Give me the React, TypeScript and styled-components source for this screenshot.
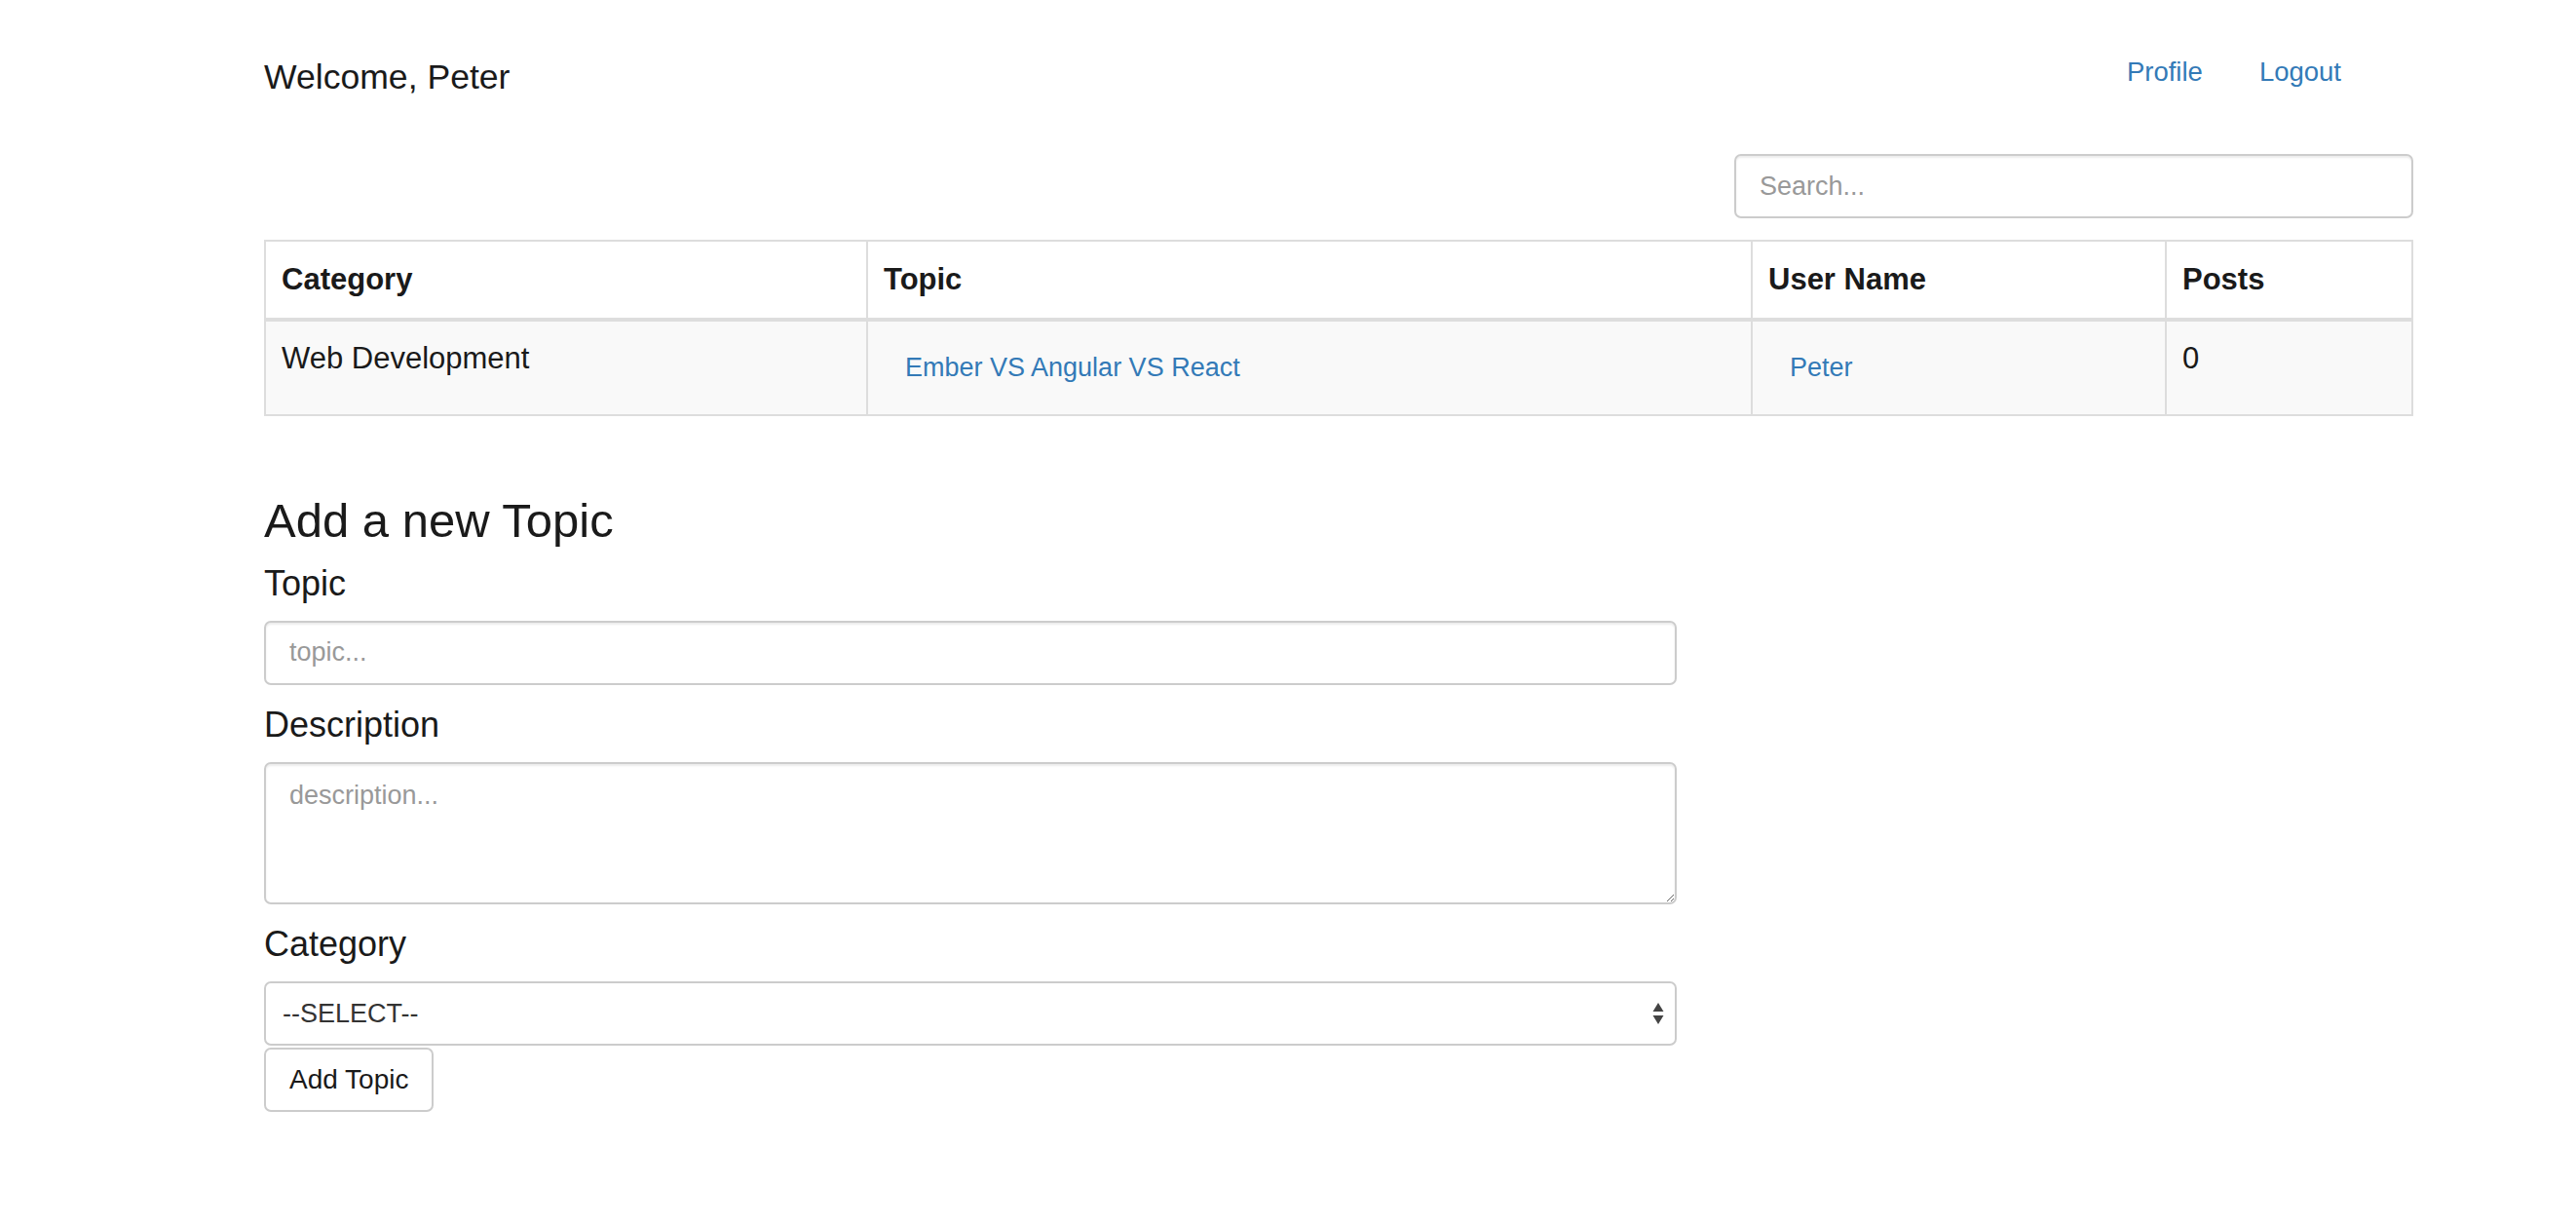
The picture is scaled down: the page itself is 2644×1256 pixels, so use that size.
import React from 'react';
import styled, { createGlobalStyle } from 'styled-components';

const GlobalStyle = createGlobalStyle`
  html, body {
    margin: 0;
    padding: 0;
    background: #fff;
  }
  body {
    font-family: "Liberation Sans", Arial, Helvetica, sans-serif;
    color: #333;
  }
  * {
    box-sizing: border-box;
  }
`;

const Page = styled.div`
  width: 2206px;
  margin-left: 271px;
  padding-bottom: 80px;
`;

const Header = styled.header`
  display: flex;
  align-items: center;
  justify-content: space-between;
  margin-top: 56px;
  height: 48px;
`;

const Welcome = styled.div`
  font-size: 35.6px;
  line-height: 1.1;
  color: #1a1a1a;
`;

const Nav = styled.nav`
  display: flex;
  align-items: center;
  gap: 58px;
  margin-bottom: 12px;
  padding-right: 74px;
`;

const NavLink = styled.a`
  font-size: 27.5px;
  color: #337ab7;
  text-decoration: none;
  cursor: pointer;
`;

const SearchRow = styled.div`
  display: flex;
  justify-content: flex-end;
  margin-top: 54px;
`;

const SmallInput = styled.input<{ $width?: number }>`
  display: block;
  width: ${(p) => (p.$width ? `${p.$width}px` : '100%')};
  height: 66px;
  padding: 0 24px;
  font-family: inherit;
  font-size: 27px;
  color: #555;
  background: #fff;
  border: 2px solid #ccc;
  border-radius: 7px;
  box-shadow: inset 0 2px 2px rgba(0, 0, 0, 0.075);
  outline: none;

  &::placeholder {
    color: #999;
  }
`;

const Table = styled.table`
  width: 100%;
  margin-top: 22px;
  border-collapse: collapse;
  table-layout: fixed;
  font-size: 31px;
  line-height: 1.42857;
`;

const HeadCell = styled.th`
  text-align: left;
  font-weight: 700;
  color: #1a1a1a;
  padding: 17px 16px;
  border: 2px solid #ddd;
  border-bottom-width: 4px;
`;

const Row = styled.tr`
  background: #f9f9f9;
`;

const Cell = styled.td`
  vertical-align: top;
  padding: 16px;
  border: 2px solid #ddd;
  color: #1a1a1a;
`;

const LinkButton = styled.a`
  display: inline-block;
  padding: 11px 22px;
  font-size: 27px;
  line-height: 1.5;
  color: #337ab7;
  text-decoration: none;
  cursor: pointer;
`;

const Form = styled.form`
  display: flex;
  flex-direction: column;
  width: 1450px;
  margin-top: 80px;
`;

const Title = styled.h3`
  margin: 0 0 17px;
  font-size: 49px;
  line-height: 54px;
  font-weight: 400;
  color: #1a1a1a;
`;

const Label = styled.label<{ $first?: boolean }>`
  display: block;
  margin-top: ${(p) => (p.$first ? '0' : '20px')};
  margin-bottom: 17px;
  font-size: 36px;
  line-height: 42px;
  color: #1a1a1a;
`;

const TextArea = styled.textarea`
  display: block;
  width: 100%;
  height: 146px;
  padding: 12px 24px;
  font-family: inherit;
  font-size: 27px;
  line-height: 1.5;
  color: #555;
  background: #fff;
  border: 2px solid #ccc;
  border-radius: 7px;
  box-shadow: inset 0 2px 2px rgba(0, 0, 0, 0.075);
  outline: none;
  resize: vertical;

  &::placeholder {
    color: #999;
  }
`;

const SelectWrap = styled.div`
  position: relative;
`;

const Select = styled.select`
  display: block;
  width: 100%;
  height: 66px;
  padding: 0 17px;
  font-family: inherit;
  font-size: 27px;
  color: #333;
  background: #fff;
  border: 2px solid #ccc;
  border-radius: 7px;
  appearance: none;
  outline: none;
`;

const SelectArrows = styled.svg`
  position: absolute;
  right: 12px;
  top: 50%;
  transform: translateY(-50%);
  pointer-events: none;
`;

const Button = styled.button`
  align-self: flex-start;
  margin-top: 2px;
  height: 66px;
  padding: 0 24px;
  font-family: inherit;
  font-size: 28px;
  color: #1a1a1a;
  background: #fff;
  border: 2px solid #ccc;
  border-radius: 7px;
  cursor: pointer;
`;

const topics = [
  { category: 'Web Development', topic: 'Ember VS Angular VS React', user: 'Peter', posts: 0 },
];

const App: React.FC = () => {
  return (
    <>
      <GlobalStyle />
      <Page>
        <Header>
          <Welcome>Welcome, Peter</Welcome>
          <Nav>
            <NavLink>Profile</NavLink>
            <NavLink>Logout</NavLink>
          </Nav>
        </Header>

        <SearchRow>
          <SmallInput $width={697} placeholder="Search..." />
        </SearchRow>

        <Table>
          <colgroup>
            <col style={{ width: 618 }} />
            <col style={{ width: 908 }} />
            <col style={{ width: 425 }} />
            <col />
          </colgroup>
          <thead>
            <tr>
              <HeadCell>Category</HeadCell>
              <HeadCell>Topic</HeadCell>
              <HeadCell>User Name</HeadCell>
              <HeadCell>Posts</HeadCell>
            </tr>
          </thead>
          <tbody>
            {topics.map((t) => (
              <Row key={t.topic}>
                <Cell>{t.category}</Cell>
                <Cell>
                  <LinkButton>{t.topic}</LinkButton>
                </Cell>
                <Cell>
                  <LinkButton>{t.user}</LinkButton>
                </Cell>
                <Cell>{t.posts}</Cell>
              </Row>
            ))}
          </tbody>
        </Table>

        <Form onSubmit={(e) => e.preventDefault()}>
          <Title>Add a new Topic</Title>
          <Label $first>Topic</Label>
          <SmallInput placeholder="topic..." />
          <Label>Description</Label>
          <TextArea placeholder="description..." />
          <Label>Category</Label>
          <SelectWrap>
            <Select defaultValue="">
              <option value="">--SELECT--</option>
              <option value="web">Web Development</option>
            </Select>
            <SelectArrows width="14" height="26" viewBox="0 0 14 26">
              <path d="M7 2 L12.5 11 L1.5 11 Z" fill="#444" />
              <path d="M7 24 L12.5 15 L1.5 15 Z" fill="#444" />
            </SelectArrows>
          </SelectWrap>
          <Button type="submit">Add Topic</Button>
        </Form>
      </Page>
    </>
  );
};

export default App;
